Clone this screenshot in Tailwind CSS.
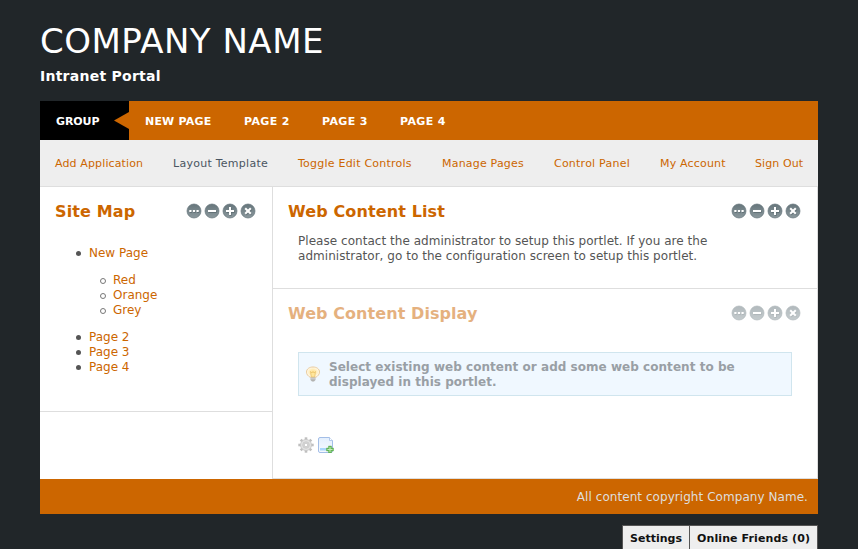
<!DOCTYPE html>
<html lang="en">
<head>
<meta charset="utf-8">
<title>Company Name</title>
<script src="https://cdn.jsdelivr.net/npm/@tailwindcss/browser@4"></script>
</head>
<body class="h-[549px] overflow-hidden bg-[#212629] px-10 font-['DejaVu_Sans',sans-serif] text-[12px] leading-[15px] text-[#555]">
<svg class="absolute h-0 w-0" xmlns="http://www.w3.org/2000/svg">
  <defs>
    <linearGradient id="disc" x1="0" y1="0" x2="0" y2="1"><stop offset="0" stop-color="#66757b"/><stop offset="1" stop-color="#8b989d"/></linearGradient>
    <linearGradient id="sheet" x1="0" y1="0" x2="0" y2="1"><stop offset="0" stop-color="#e3effd"/><stop offset="1" stop-color="#f6faff"/></linearGradient>
    <radialGradient id="glow"><stop offset="0" stop-color="#ffe08a"/><stop offset=".5" stop-color="#ffebb4"/><stop offset="1" stop-color="#fffaf0"/></radialGradient>
  </defs>
  <symbol id="tools" viewBox="0 0 72 16">
    <g fill="url(#disc)" stroke="#66757b" stroke-width=".7">
      <circle cx="8" cy="8" r="7"/><circle cx="26" cy="8" r="7"/><circle cx="44" cy="8" r="7"/><circle cx="62" cy="8" r="7"/>
    </g>
    <g fill="none" stroke="#46555b" stroke-width="2" opacity=".5" transform="translate(.6 .9)">
      <path d="M3.300 8h2.200"/><path d="M6.900 8h2.200"/><path d="M10.500 8h2.200"/><path d="M22 8h8"/><path d="M40 8h8"/><path d="M44 4v8"/><path d="M59.300 5.300l5.400 5.400"/><path d="M64.700 5.300l-5.400 5.400"/>
    </g>
    <g fill="none" stroke="#fff" stroke-width="2">
      <path d="M3.300 8h2.200"/><path d="M6.900 8h2.200"/><path d="M10.500 8h2.200"/><path d="M22 8h8"/><path d="M40 8h8"/><path d="M44 4v8"/><path d="M59.200 5.200l5.600 5.600"/><path d="M64.800 5.200l-5.600 5.600"/>
    </g>
  </symbol>
</svg>

<header class="h-[101px] pt-5 text-white">
  <h1 class="text-[34px] leading-[42px] tracking-[0.5px]">COMPANY NAME</h1>
  <h2 class="mt-[5px] text-[14px] font-bold leading-[18px] tracking-[0.25px]">Intranet Portal</h2>
</header>

<nav class="flex h-[39px] items-center bg-[#cc6600] text-[11px] font-bold text-white">
  <a class="flex h-full w-[89px] items-center justify-between bg-black pl-4 pt-px tracking-[-0.1px]">GROUP
    <svg class="mb-px h-[17px] w-[15px]" viewBox="0 0 15 17"><path d="M15 0v17L0 8.500z" fill="#cc6600"/></svg>
  </a>
  <a class="ml-4 w-[67px] pt-px tracking-[0.2px]">NEW PAGE</a>
  <a class="ml-8 w-[46px] pt-px tracking-[0.35px]">PAGE 2</a>
  <a class="ml-8 w-[46px] pt-px tracking-[0.35px]">PAGE 3</a>
  <a class="ml-8 w-[46px] pt-px tracking-[0.35px]">PAGE 4</a>
</nav>

<nav class="flex h-[47px] items-center gap-[30px] whitespace-nowrap border-b border-[#dedede] bg-[#eeeeee] px-[15px] text-[11px] text-[#cc6600]">
  <a class="w-[88px] tracking-[0.13px]">Add Application</a>
  <a class="w-[95px] tracking-[0.26px] text-[#4a5561]">Layout Template</a>
  <a class="w-[114px] tracking-[0.23px]">Toggle Edit Controls</a>
  <a class="w-[82px] tracking-[0.2px]">Manage Pages</a>
  <a class="w-[76px] tracking-[0.23px]">Control Panel</a>
  <a class="w-[65px] tracking-[0.18px]">My Account</a>
  <a class="w-[48px] tracking-[0.08px]">Sign Out</a>
</nav>

<main class="flex h-[292px] bg-white">
  <aside class="w-[233px] border-r border-[#dedede]">
    <section class="h-[225px] border-b border-[#dedede] pt-4">
      <div class="flex h-4 items-center justify-between pl-[15px] pr-[14px]">
        <h3 class="pt-[2px] text-[16px] font-bold leading-4 tracking-[0.12px] text-[#cc6600]">Site Map</h3>
        <svg class="h-4 w-[72px]"><use href="#tools"/></svg>
      </div>
      <ul class="mt-[27px] pl-9 text-[#cc6600]">
        <li>
          <div class="flex items-center gap-2"><i class="h-[5px] w-[5px] rounded-full bg-[#555]"></i><a>New Page</a></div>
          <ul class="my-3 pl-6">
            <li class="flex items-center gap-[7px]"><i class="h-[6px] w-[6px] rounded-full border border-[#777]"></i><a>Red</a></li>
            <li class="flex items-center gap-[7px]"><i class="h-[6px] w-[6px] rounded-full border border-[#777]"></i><a>Orange</a></li>
            <li class="flex items-center gap-[7px]"><i class="h-[6px] w-[6px] rounded-full border border-[#777]"></i><a>Grey</a></li>
          </ul>
        </li>
        <li class="flex items-center gap-2"><i class="h-[5px] w-[5px] rounded-full bg-[#555]"></i><a>Page 2</a></li>
        <li class="flex items-center gap-2"><i class="h-[5px] w-[5px] rounded-full bg-[#555]"></i><a>Page 3</a></li>
        <li class="flex items-center gap-2"><i class="h-[5px] w-[5px] rounded-full bg-[#555]"></i><a>Page 4</a></li>
      </ul>
    </section>
  </aside>
  <div class="flex-1 border-b border-r border-[#dedede]">
    <section class="h-[102px] border-b border-[#dedede] pt-4">
      <div class="flex h-4 items-center justify-between pl-[15px] pr-[14px]">
        <h3 class="pt-[2px] text-[16px] font-bold leading-4 tracking-[0.12px] text-[#cc6600]">Web Content List</h3>
        <svg class="h-4 w-[72px]"><use href="#tools"/></svg>
      </div>
      <p class="ml-[25px] mt-[15px] w-[440px] tracking-[0.035px]">Please contact the administrator to setup this portlet. If you are the administrator, go to the configuration screen to setup this portlet.</p>
    </section>
    <section class="pt-4">
      <div class="flex h-4 items-center justify-between pl-[15px] pr-[14px] opacity-50">
        <h3 class="pt-[2px] text-[16px] font-bold leading-4 tracking-[0.07px] text-[#cc6600]">Web Content Display</h3>
        <svg class="h-4 w-[72px]"><use href="#tools"/></svg>
      </div>
      <div class="ml-[25px] mr-[25px] mt-[31px] flex h-11 items-center border border-[#d0e5ee] bg-[#f0f8ff] pl-[6px] font-bold text-[#999fa5]">
        <svg class="mr-2 h-4 w-4 shrink-0" viewBox="0 0 16 16">
          <path d="M5 11.200C3.200 10 1.500 8.500 1.500 6.100 1.500 3 4.300 1 8 1s6.500 2 6.500 5.100c0 2.400-1.700 3.900-3.500 5.100z" fill="url(#glow)" stroke="#eacb9c"/>
          <path d="M5.500 5.500l1.500 1.500 1-1.500 1 1.500 1.500-1.500-.8 5.500H6.300z" fill="#ffe69b" stroke="#e8bf64" stroke-width=".7"/>
          <path d="M5.500 11.500h5v2.500L9 15.500H7L5.500 14z" fill="#b2b2b0"/><path d="M5.500 12.800h5" stroke="#e5e5e5" stroke-width=".7"/>
        </svg>
        <p class="w-[415px] pt-px tracking-[0.035px]">Select existing web content or add some web content to be displayed in this portlet.</p>
      </div>
      <div class="ml-[25px] mt-[41px] flex gap-1">
        <svg class="h-4 w-4" viewBox="0 0 16 16">
          <g stroke="#bfbfbf" stroke-width="2.600"><path d="M8 .3v15.400"/><path d="M.3 8h15.400"/><path d="M2.700 2.700l10.600 10.600"/><path d="M13.300 2.700L2.700 13.300"/></g>
          <circle cx="8" cy="8" r="5.500" fill="#e2e2e2" stroke="#c6c6c6" stroke-width=".8"/>
          <circle cx="8" cy="8" r="3.300" fill="#d7d7d7" stroke="#c7c7c7" stroke-width=".7"/>
          <circle cx="8" cy="8" r="1.800" fill="#fff" stroke="#bdbdbd" stroke-width=".7"/>
        </svg>
        <svg class="h-4 w-4" viewBox="0 0 16 16">
          <path d="M2 .5h9.500l3 3V14q0 1.500-1.500 1.500H2Q.5 15.500.5 14V2Q.5.5 2 .5z" fill="url(#sheet)" stroke="#a3bee7"/>
          <path d="M11.500.5v3h3" fill="#fff" stroke="#a3bee7" stroke-width=".8"/>
          <path d="M2 11h8v2.500H2z" fill="#a9d6fb"/>
          <path d="M10.500 9h3v2h2v3h-2v2h-3v-2h-2v-3h2z" fill="#65b957" stroke="#58a74b" stroke-width=".4"/>
          <path d="M12 10v5" stroke="#c7edbc"/><path d="M9.500 12.500h5" stroke="#c7edbc"/>
        </svg>
      </div>
    </section>
  </div>
</main>

<footer class="flex h-[35px] items-center justify-end bg-[#cc6600] pr-[10px] pt-px tracking-[0.055px] text-[#dedede]">All content copyright Company Name.</footer>

<div class="mt-[11px] flex justify-end text-[11px] font-bold text-[#111]">
  <div class="flex h-6 border-l border-t border-[#555] bg-[#eeeeee]">
    <span class="flex w-[67px] items-center border-r border-[#555] pl-[7px] pt-[2px]">Settings</span>
    <span class="flex w-[128px] items-center whitespace-nowrap border-r border-[#555] pl-[7px] pt-[2px] tracking-[0.11px]">Online Friends (0)</span>
  </div>
</div>
</body>
</html>
